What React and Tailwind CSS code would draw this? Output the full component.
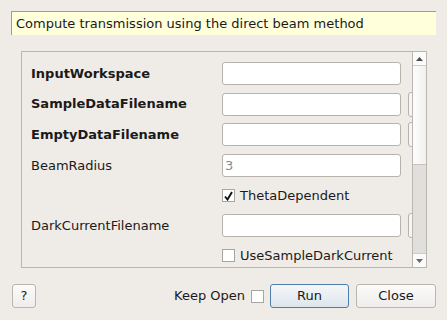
import React from 'react';

// Algorithm dialog: Compute transmission (direct beam)
const Check = ({ checked }) => (
    <span className="w-[13px] h-[13px] border border-[#a9a5a0] bg-white flex items-center justify-center shrink-0">
        {checked && (
            <svg width="9" height="10" viewBox="0 0 9 10">
                <path d="M1 5.5 L3.5 8.5 L8 1" fill="none" stroke="#111" strokeWidth="1.9" />
            </svg>
        )}
    </span>
);

const TextBox = ({ placeholder }) => (
    <div className="w-[179px] h-[23px] shrink-0 bg-white border border-[#b6b2ad] rounded-[3px] flex items-center pl-[2px] text-[#8a8a8a]">
        {placeholder}
    </div>
);

const Browse = () => (
    <div className="w-[60px] h-[25px] shrink-0 ml-[7px] bg-[#f7f6f5] border border-[#b6b2ad] rounded-[3px]" />
);

const rows = [
    { label: 'InputWorkspace', bold: true, kind: 'text' },
    { label: 'SampleDataFilename', bold: true, kind: 'file' },
    { label: 'EmptyDataFilename', bold: true, kind: 'file' },
    { label: 'BeamRadius', kind: 'text', placeholder: '3' },
    { label: 'ThetaDependent', kind: 'check', checked: true },
    { label: 'DarkCurrentFilename', kind: 'file' },
    { label: 'UseSampleDarkCurrent', kind: 'check' },
];

const Btn = ({ children, className }) => (
    <button className={`h-[24px] rounded-[3px] border bg-gradient-to-b flex items-center justify-center ${className}`}>
        {children}
    </button>
);

export default function App() {
    return (
        <div className="w-[447px] h-[320px] bg-[#efebe7] text-[#1a1a1a] text-[13px] flex flex-col overflow-hidden" style={{ fontFamily: '"DejaVu Sans", sans-serif' }}>
            <div className="mt-[11px] mx-[11px] h-[24px] bg-[#ffffdc] border-l border-t border-[#9f9c98] flex items-center pl-[4px]">
                Compute transmission using the direct beam method
            </div>

            <div className="mt-[16px] ml-[21px] mr-[20px] h-[217px] border border-[#bab6b1] flex overflow-hidden">
                <div className="flex-1 overflow-hidden pt-[10px] pl-[9px]">
                    <div className="flex flex-col gap-[7.67px] w-[450px]">
                        {rows.map(r => (
                            <div key={r.label} className={`flex items-center ${r.kind === 'check' ? 'h-[22px]' : 'h-[23px]'}`}>
                                <span className={`w-[191px] shrink-0 ${r.bold ? 'font-bold' : ''}`}>
                                    {r.kind !== 'check' ? r.label : ''}
                                </span>
                                {r.kind === 'check' ? (
                                    <div className="flex items-center gap-[5px]">
                                        <Check checked={r.checked} />
                                        <span>{r.label}</span>
                                    </div>
                                ) : (
                                    <>
                                        <TextBox placeholder={r.placeholder} />
                                        {r.kind === 'file' && <Browse />}
                                    </>
                                )}
                            </div>
                        ))}
                    </div>
                </div>
                <div className="w-[14px] shrink-0 border-l border-[#bab6b1] flex flex-col">
                    <div className="h-[14px] bg-[#fbfbfb] border-b border-[#cfcbc6] flex items-center justify-center">
                        <svg width="7" height="4" viewBox="0 0 7 4"><path d="M0 4 L3.5 0 L7 4 Z" fill="#4a4a4a" /></svg>
                    </div>
                    <div className="h-[99px] bg-gradient-to-r from-[#fdfdfd] to-[#f1f0ef] border-b border-[#c6c2bd]" />
                    <div className="flex-1 bg-[#e1dfdc]" />
                    <div className="h-[14px] bg-[#fbfbfb] border-t border-[#cfcbc6] flex items-center justify-center">
                        <svg width="7" height="4" viewBox="0 0 7 4"><path d="M0 0 L7 0 L3.5 4 Z" fill="#6a6a6a" /></svg>
                    </div>
                </div>
            </div>

            <div className="mt-[16px] mx-[11px] flex items-center">
                <Btn className="w-[24px] ml-[1px] border-[#b9b5b0] from-[#fbfbfa] to-[#efedeb]">?</Btn>
                <div className="flex-1" />
                <span>Keep Open</span>
                <span className="ml-[6px] mr-[6px]"><Check /></span>
                <Btn className="w-[79px] border-[#4f7ea8] from-[#f4f7f9] to-[#dde5ec]">Run</Btn>
                <Btn className="w-[80px] ml-[7px] border-[#b9b5b0] from-[#fbfbfa] to-[#efedeb]">Close</Btn>
            </div>
        </div>
    );
}
